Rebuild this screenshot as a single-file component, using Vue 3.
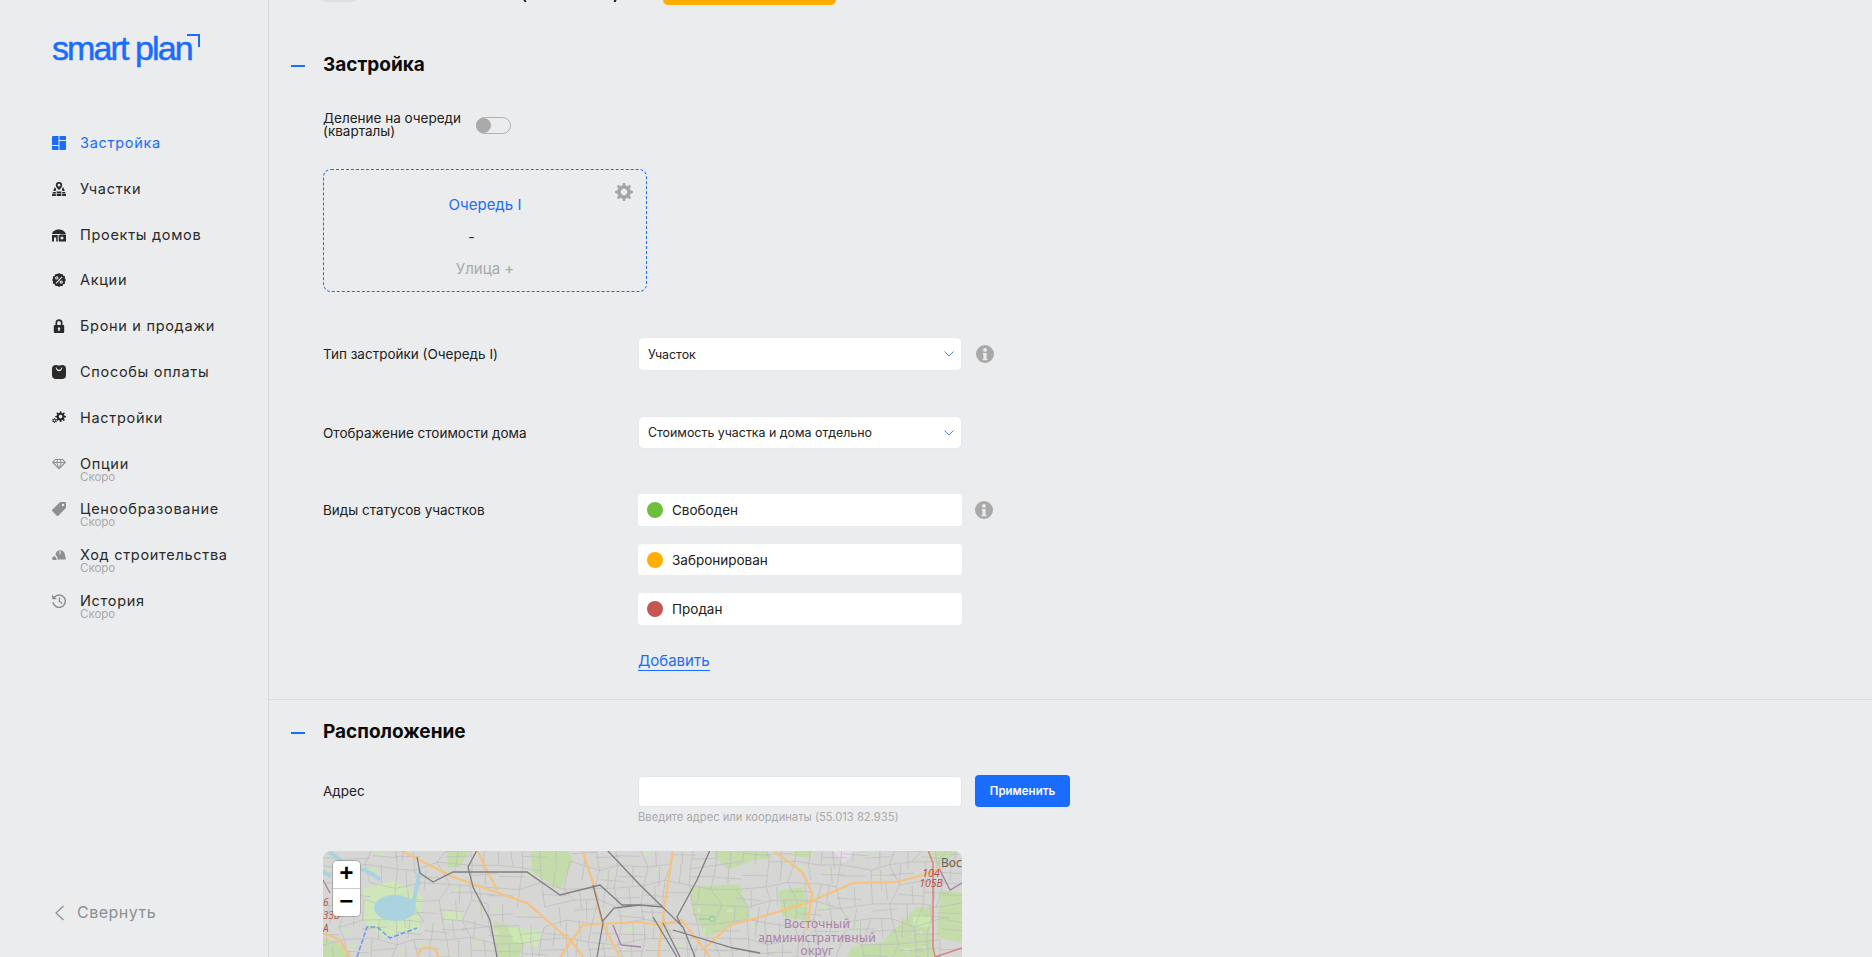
<template>
  <div class="page">
    <aside class="sidebar">
      <div class="logo">
        <span class="logo-text">smart plan</span>
        <span class="logo-corner"></span>
      </div>
      <nav class="menu">
        <a v-for="item in menu" :key="item.title" class="menu-item" :class="{ active: item.active }">
          <svg class="menu-icon" :class="{ muted: item.soon }" viewBox="0 0 14 14" v-html="item.icon"></svg>
          <span class="menu-text">
            <span class="menu-title">{{ item.title }}</span>
            <span v-if="item.soon" class="menu-soon">Скоро</span>
          </span>
        </a>
      </nav>
      <div class="collapse">
        <svg width="11" height="16" viewBox="0 0 11 16"><path d="M9.500 1 2 8l7.500 7" fill="none" stroke="#8e8f91" stroke-width="1.300" /></svg>
        <span>Свернуть</span>
      </div>
    </aside>

    <main class="content">
      <div class="top-stub">
        <span class="stub-grey"></span>
        <span class="stub-paren">(</span>
        <span class="stub-paren second">)</span>
        <span class="stub-btn"></span>
      </div>

      <section class="section first">
        <div class="section-head">
          <span class="dash"></span>
          <h2>Застройка</h2>
        </div>

        <div class="toggle-row">
          <span class="toggle-label">Деление на очереди<br />(кварталы)</span>
          <span class="toggle"><span class="knob"></span></span>
        </div>

        <div class="queue-card">
          <svg class="gear" viewBox="0 0 24 24"><path fill-rule="evenodd" :d="cardGear" /></svg>
          <div class="queue-title">Очередь I</div>
          <div class="queue-dash">-</div>
          <div class="queue-street">Улица +</div>
        </div>

        <div class="field-row type-row">
          <label>Тип застройки (Очередь I)</label>
          <div class="select">
            <span>Участок</span>
            <svg width="10" height="6" viewBox="0 0 10 6"><path d="M.5.5 5 5 9.500.5" fill="none" stroke="#3d84f5" stroke-width="1" /></svg>
          </div>
          <svg class="info" viewBox="0 0 18 18"><path fill-rule="evenodd" :d="infoPath" /></svg>
        </div>

        <div class="field-row cost-row">
          <label>Отображение стоимости дома</label>
          <div class="select short">
            <span>Стоимость участка и дома отдельно</span>
            <svg width="10" height="6" viewBox="0 0 10 6"><path d="M.5.5 5 5 9.500.5" fill="none" stroke="#3d84f5" stroke-width="1" /></svg>
          </div>
        </div>

        <div class="status-row">
          <label>Виды статусов участков</label>
          <div class="status-list">
            <div v-for="s in statuses" :key="s.name" class="status" :class="s.cls">
              <span class="status-dot" :style="{ background: s.color }"></span>
              <span>{{ s.name }}</span>
            </div>
            <a class="add-link">Добавить</a>
          </div>
          <svg class="info" viewBox="0 0 18 18"><path fill-rule="evenodd" :d="infoPath" /></svg>
        </div>
      </section>

      <section class="section second">
        <div class="section-head">
          <span class="dash"></span>
          <h2>Расположение</h2>
        </div>

        <div class="address-row">
          <label>Адрес</label>
          <div class="address-col">
            <input class="address-input" />
            <div class="hint">Введите адрес или координаты (55.013 82.935)</div>
          </div>
          <button class="apply">Применить</button>
        </div>

        <div class="map">
          <svg class="map-svg" viewBox="0 0 639 106">
            <rect width="639" height="106" fill="#d6d6d5" />
            <polygon v-for="(g, i) in greens" :key="'g' + i" :points="g" fill="#c4dcaa" />
            <polygon v-for="(g, i) in pales" :key="'p' + i" :points="g" fill="#cdebb0" opacity=".8" />
            <polygon points="510,-1 534,-1 520,12" fill="#e8dcea" />
            <path :d="spots" fill="#c9e6b8" />
            <path :d="streets" fill="none" stroke="#bcbcbc" stroke-width=".7" />
            <path d="M4-1 17 9c12 8 28 8 40 20M97 19c-2 12-6 26-7 38M0 20l8 6" fill="none" stroke="#aad3df" stroke-width="4" />
            <ellipse cx="72" cy="57" rx="21" ry="13" fill="#aad3df" />
            <path d="M34 106l10-30h10l13 11 27-10" fill="none" stroke="#6e9cf0" stroke-width="1.600" stroke-dasharray="5 2" />
            <path d="M0 29l7 13M617 19l10 20 12-7M290 74l8 20 20 2" fill="none" stroke="#a87fa5" stroke-width="1.300" />
            <path d="M376 68h10" stroke="#7fcba0" stroke-width="1" />
            <circle cx="389" cy="68" r="2.500" fill="none" stroke="#7fcba0" />
            <path :d="majorRoads" fill="none" stroke="#f6c27e" stroke-width="2.200" />
            <path :d="rails" fill="none" stroke="#7f7d80" stroke-width="1.300" />
            <path d="M605-1l5 13v84l2 10M612 106l27-9" fill="none" stroke="#d9837a" stroke-width="1.500" />
          </svg>
          <span class="map-label left-no">6<br />33В<br />А</span>
          <span class="map-label region">Восточный<br />административный<br />округ</span>
          <span class="map-label vost">Вост</span>
          <span class="map-label road">104<br />105В</span>
          <div class="zoom-control">
            <span class="zoom-btn">+</span>
            <span class="zoom-btn">−</span>
          </div>
        </div>
      </section>
    </main>
  </div>
</template>

<script setup>
// builds a cog outline with a round hole, used for the settings icons
function gear(cx, cy, R, r, teeth, hole) {
  const pts = []
  const step = (Math.PI * 2) / teeth
  for (let i = 0; i < teeth; i++) {
    const a = i * step - Math.PI / 2
    const list = [
      [a - step * 0.26, r],
      [a - step * 0.17, R],
      [a + step * 0.17, R],
      [a + step * 0.26, r],
    ]
    for (const [ang, rad] of list) {
      pts.push(`${(cx + Math.cos(ang) * rad).toFixed(2)} ${(cy + Math.sin(ang) * rad).toFixed(2)}`)
    }
  }
  const outline = 'M' + pts.join('L') + 'Z'
  return `${outline}M${cx - hole} ${cy}a${hole} ${hole} 0 1 0 ${hole * 2} 0a${hole} ${hole} 0 1 0 ${-hole * 2} 0z`
}

// scalloped badge outline
function badge(cx, cy, R, r, n) {
  const pts = []
  for (let i = 0; i < n * 2; i++) {
    const a = (i * Math.PI) / n
    const rad = i % 2 ? r : R
    pts.push(`${(cx + Math.cos(a) * rad).toFixed(2)} ${(cy + Math.sin(a) * rad).toFixed(2)}`)
  }
  return 'M' + pts.join('L') + 'Z'
}

const cardGear = gear(12, 12, 12, 9.2, 8, 4.2)
const infoPath = 'M9 0a9 9 0 1 0 0 18A9 9 0 0 0 9 0zM9 3a1.900 1.900 0 1 1 0 3.800A1.900 1.900 0 0 1 9 3zM6.900 8h3.700v6h1v1.200H6.400V14h1v-4.800h-.5z'

const menu = [
  { title: 'Застройка', active: true, icon: '<path d="M1 0h5.500v9H0V1a1 1 0 0 1 1-1zM7.500 0H13a1 1 0 0 1 1 1v3H7.500zM7.500 5H14v8a1 1 0 0 1-1 1H7.500zM0 10h6.500v4H1a1 1 0 0 1-1-1z"/>' },
  { title: 'Участки', icon: '<path fill-rule="evenodd" d="M7 0a3.200 3.200 0 0 1 3.200 3.200C10.200 5 8 7.200 7 8 6 7.200 3.800 5 3.800 3.200A3.200 3.200 0 0 1 7 0zm0 1.800a1.400 1.400 0 1 0 0 2.800 1.400 1.400 0 0 0 0-2.800zM2.800 5l1.400 2.300L3.500 9H1.200zM11.200 5 9.800 7.300l.7 1.700h2.300zM4.500 9h5l.3.6H4.200zM.9 10h3v1.500H.4zM4.700 10h4.600v1.500H4.700zM10.100 10h3l.5 1.500h-3.500zM.2 12.100h3.600V14H0zM4.700 12.100h4.600V14H4.700zM10.200 12.100h3.600L14 14h-3.800z"/>' },
  { title: 'Проекты домов', icon: '<path fill-rule="evenodd" d="M7 1.500c3.600 0 6.500 2.200 7 5H8.800c-.3-.3-.6-.5-1-.5H0c.5-2.800 3.400-4.500 7-4.500zM0 7h5.700v6.500H4.200V9.500H2v4H0zM6.700 7H14v6.500H6.700zM8.600 8.800v2.400h2.700V8.800z"/>' },
  { title: 'Акции', icon: `<path fill-rule="evenodd" d="${badge(7, 7, 7, 6.1, 12)}M9.700 3.400 3.600 9.900l.8.800 6.100-6.500zM4.800 3.200a1.700 1.700 0 1 0 0 3.400 1.700 1.700 0 0 0 0-3.400zm0 1.100a.6.6 0 1 1 0 1.200.6.6 0 0 1 0-1.200zM9.200 7.400a1.700 1.700 0 1 0 0 3.400 1.700 1.700 0 0 0 0-3.400zm0 1.100a.6.6 0 1 1 0 1.200.6.6 0 0 1 0-1.200z"/>` },
  { title: 'Брони и продажи', icon: '<path fill-rule="evenodd" d="M3.500 6V3.700a3.500 3.500 0 0 1 7 0V6h.7a1 1 0 0 1 1 1v6a1 1 0 0 1-1 1H2.800a1 1 0 0 1-1-1V7a1 1 0 0 1 1-1zM5.200 6h3.600V3.700a1.800 1.800 0 0 0-3.600 0zM7 8.300a1.200 1.200 0 0 0-.7 2.200V12h1.400v-1.500A1.200 1.200 0 0 0 7 8.300z"/>' },
  { title: 'Способы оплаты', icon: '<path fill-rule="evenodd" d="M4 0c.8 0 1.200.6 3 .6S9.200 0 10 0a4 4 0 0 1 4 4v6a4 4 0 0 1-4 4H4a4 4 0 0 1-4-4V4a4 4 0 0 1 4-4zM3.600 2.600C4 5 5.400 6.200 7 6.200s3-1.200 3.400-3.600h-1C9.200 4 8.200 4.800 7 4.800S4.800 4 4.600 2.600z"/>' },
  { title: 'Настройки', icon: `<path fill-rule="evenodd" d="${gear(8.6, 5.6, 5.4, 4, 8, 1.8)}"/><path fill-rule="evenodd" d="${gear(2.5, 9.6, 2.5, 1.8, 6, 0.9)}"/>` },
  { title: 'Опции', soon: true, icon: '<path fill-rule="evenodd" d="M3 2h8l3 3.500-7 7-7-7zM3.500 3 1.800 5h2.600L5.300 3zM6.200 3 5.400 5h3.200L7.800 3zM8.700 3l.9 2h2.600l-1.700-2zM2.300 6l3.600 3.700L4.500 6zM5.500 6 7 10.500 8.500 6zM9.500 6l-1.400 3.700L11.700 6z"/>' },
  { title: 'Ценообразование', soon: true, icon: '<path fill-rule="evenodd" d="M8.500 0H13a1 1 0 0 1 1 1v4.500a1 1 0 0 1-.3.700L6.200 13.700a1 1 0 0 1-1.400 0L.3 9.200a1 1 0 0 1 0-1.400L7.800.3a1 1 0 0 1 .7-.3zM11 1.800a1.200 1.200 0 1 0 0 2.400 1.200 1.200 0 0 0 0-2.400z"/>' },
  { title: 'Ход строительства', soon: true, icon: '<path d="M7.500 2v4.500h1V2.100c2.700.5 4.700 2.800 4.700 5.700v1.400c.5.200.8.600.8 1.100 0 .8-.7 1.200-1.500 1.200H5.500V9.200L3.400 6.600C4 4.100 5.500 2.400 7.500 2zM2.700 8l1.800 2.200v1.700h-3C.7 11.900 0 11.300 0 10.500 0 9.300 1.200 8.400 2.700 8z"/>' },
  { title: 'История', soon: true, icon: '<path d="M2.300 3.300A6.200 6.200 0 1 1 1 8.200" fill="none" stroke="#8e8f91" stroke-width="1.500"/><path d="M0 .5 5 5.200H.2zM6.700 3.500h1.500v3.700l2.400 1.800-.9 1.100-3-2.300z"/>' },
]

const statuses = [
  { name: 'Свободен', color: '#6dbe3c' },
  { name: 'Забронирован', color: '#ffae00', cls: 'thin' },
  { name: 'Продан', color: '#c65651' },
]

const greens = [
  '207,-1 244,-1 250,9 237,39 210,22',
  '124,-1 147,-1 137,16 125,16',
  '0,86 17,93 27,106 0,106',
  '387,-1 405,19 430,9 450,7 440,-1',
  '477,-1 490,-1 487,7 464,4',
  '367,36 417,33 427,66 384,86 370,62',
  '594,56 610,56 607,82 560,90',
  '617,39 639,42 639,92 614,86',
  '607,-1 637,-1 615,16',
  '529,96 610,82 610,106 524,106',
  '170,70 205,80 196,106 176,106',
  '455,40 480,36 486,70 460,66',
]

const pales = [
  '40,38 70,30 100,44 96,80 60,86 42,72',
  '120,60 135,58 140,68 124,72',
  '185,76 220,80 214,96 190,90',
  '590,66 608,66 606,76 590,76',
]

const majorRoads =
  'M77-1 130 26l74 26 46 40 10 14M154-1l20 40M259-1l11 33 9 40 18 34M237 106l23-32 54-3 23 3 22-5 28 37M0 82l17 7 10 17M350-1l-10 67-5 40M380 99l27-25 27-7 50-15 46-20 44-1 26-7 39-15M450-1l30 23 9 20-5 37M95 106a10 10 0 0 1 20 0'

const rails =
  'M94 6l3 16 13 9 20-10h74l33 23 40-10 22 20h18l23 2M154-1l-9 17 5 20 17 33 7 37M284-1l33 35 43 42 12 30M270 34l10 38-6 34M279 71l12-14 26-3M387-1l-13 30-20 37 5 10M350 79l60 18 27 5M340 72l20 40M330 66l24 40'

let seed = 4711
const rnd = () => {
  seed = (seed * 16807) % 2147483647
  return seed / 2147483647
}

// thin street grid, irregular on purpose so that it reads as a city map
const lattice = []
for (let j = 0; j <= 6; j++) {
  const row = []
  for (let i = 0; i <= 26; i++) {
    row.push([i * 25 - 5 + rnd() * 14 - 7, j * 19 - 4 + rnd() * 10 - 5])
  }
  lattice.push(row)
}
let streets = ''
let spots = ''
lattice.forEach((row, j) => {
  row.forEach((p, i) => {
    const right = row[i + 1]
    const down = lattice[j + 1] && lattice[j + 1][i]
    if (right && rnd() > 0.12) streets += `M${p[0].toFixed(1)} ${p[1].toFixed(1)}L${right[0].toFixed(1)} ${right[1].toFixed(1)}`
    if (down && rnd() > 0.12) streets += `M${p[0].toFixed(1)} ${p[1].toFixed(1)}L${down[0].toFixed(1)} ${down[1].toFixed(1)}`
    if (right && rnd() > 0.3) {
      const mx = (p[0] + right[0]) / 2
      streets += `M${mx.toFixed(1)} ${p[1].toFixed(1)}l${(rnd() * 6 - 3).toFixed(1)} 19`
    }
    if (down && rnd() > 0.3) {
      const my = (p[1] + down[1]) / 2
      streets += `M${p[0].toFixed(1)} ${my.toFixed(1)}l25 ${(rnd() * 5 - 2.5).toFixed(1)}`
    }
    if (rnd() > 0.55) {
      const w = (2 + rnd() * 5).toFixed(1)
      const h = (1.5 + rnd() * 3).toFixed(1)
      spots += `M${(p[0] + 5).toFixed(1)} ${(p[1] + 4).toFixed(1)}h${w}v${h}h-${w}z`
    }
  })
})
</script>

<style>
html,
body {
  margin: 0;
  height: 100%;
  overflow: hidden;
  background: #ebecee;
}
</style>

<style scoped>
.page {
  display: flex;
  height: 957px;
  overflow: hidden;
  background: #ebecee;
  font-family: Inter, "Noto Sans", sans-serif;
  color: #212121;
}

.sidebar {
  display: flex;
  flex-direction: column;
  flex: none;
  width: 216px;
  padding: 30px 0 0 52px;
  border-right: 1px solid #d6d7d9;
}

.logo {
  display: flex;
  align-items: flex-start;
  height: 36px;
}

.logo-text {
  font-family: "Liberation Sans", sans-serif;
  font-size: 34px;
  line-height: 36px;
  letter-spacing: -1.9px;
  color: #1a6cff;
  -webkit-text-stroke: 0.5px #1a6cff;
  white-space: nowrap;
}

.logo-corner {
  flex: none;
  width: 11px;
  height: 11px;
  margin: 4px 0 0 -5px;
  border-top: 2px solid #1a6cff;
  border-right: 2px solid #1a6cff;
}

.menu {
  display: flex;
  flex-direction: column;
  margin-top: 58px;
}

.menu-item {
  display: flex;
  align-items: flex-start;
  gap: 14px;
  height: 45.8px;
  padding-top: 10px;
  box-sizing: border-box;
  color: #2a2a2a;
  fill: #2a2a2a;
}

.menu-item.active {
  color: #1a6cff;
  fill: #1a6cff;
}

.menu-icon {
  width: 14px;
  height: 14px;
  margin-top: 2px;
  flex: none;
}

.menu-icon.muted {
  fill: #8e8f91;
}

.menu-text {
  display: flex;
  flex-direction: column;
}

.menu-title {
  font-size: 14.5px;
  line-height: 17px;
  letter-spacing: 0.7px;
  white-space: nowrap;
}

.menu-soon {
  font-size: 11.5px;
  line-height: 11px;
  color: #a9a9a9;
}

.collapse {
  display: flex;
  align-items: center;
  gap: 12px;
  margin: auto 0 35px 2px;
  font-size: 16px;
  line-height: 19px;
  letter-spacing: 0.5px;
  color: #8e8f91;
}

.content {
  flex: 1;
  min-width: 0;
}

.top-stub {
  display: flex;
  align-items: flex-end;
  height: 5px;
  padding-left: 54px;
  overflow: hidden;
}

.stub-grey {
  width: 33px;
  height: 2px;
  margin-bottom: 3px;
  border-radius: 0 0 3px 3px;
  background: #dfe0e2;
}

.stub-paren {
  width: 8px;
  margin: 0 0 3px 165px;
  font-size: 16px;
  line-height: 16px;
  font-weight: 600;
  color: #111;
}

.stub-paren.second {
  margin-left: 84px;
}

.stub-btn {
  width: 173px;
  height: 5px;
  margin-left: 42px;
  border-radius: 0 0 5px 5px;
  background: #ffae00;
}

.section {
  padding-left: 54px;
}

.section.first {
  height: 695px;
  padding-top: 47px;
  box-sizing: border-box;
  border-bottom: 1px solid #dcdddf;
}

.section.second {
  padding-top: 19px;
}

.section-head {
  position: relative;
  display: flex;
  align-items: center;
  height: 24px;
}

.dash {
  position: absolute;
  left: -32px;
  top: 13px;
  width: 14px;
  height: 2px;
  background: #1a6cff;
}

h2 {
  margin: 0;
  font-size: 19px;
  font-weight: 700;
  color: #0b0b0b;
}

.toggle-row {
  display: flex;
  align-items: center;
  gap: 15px;
  margin-top: 36px;
}

.toggle-label {
  font-size: 13.5px;
  line-height: 13px;
}

.toggle {
  display: block;
  position: relative;
  width: 33px;
  height: 15px;
  border: 1px solid #b0b0b0;
  border-radius: 10px;
}

.knob {
  position: absolute;
  left: -1px;
  top: 0;
  width: 15px;
  height: 15px;
  border-radius: 50%;
  background: #aaa;
}

.queue-card {
  position: relative;
  width: 322px;
  height: 121px;
  margin-top: 31px;
  border: 1px dashed #1a6cff;
  border-radius: 8px;
  text-align: center;
}

.gear {
  position: absolute;
  top: 13px;
  right: 13px;
  width: 18px;
  height: 18px;
  fill: #a5a5a5;
}

.queue-title {
  margin-top: 26px;
  font-size: 15px;
  line-height: 18px;
  color: #1a6cff;
}

.queue-dash {
  margin-top: 14px;
  padding-right: 27px;
  font-size: 14px;
  line-height: 18px;
}

.queue-street {
  margin-top: 14px;
  font-size: 15px;
  line-height: 18px;
  color: #a9a9a9;
}

.field-row {
  display: flex;
  align-items: center;
}

.field-row label,
.status-row label,
.address-row label {
  width: 315px;
  flex: none;
  font-size: 13.5px;
}

.type-row {
  margin-top: 46px;
}

.cost-row {
  margin-top: 47px;
}

.select {
  display: flex;
  align-items: center;
  justify-content: space-between;
  width: 322px;
  height: 32px;
  margin-left: 1px;
  padding: 0 7px 0 9px;
  box-sizing: border-box;
  background: #fff;
  border-radius: 4px;
  box-shadow: 0 0 1px rgba(0, 0, 0, 0.15);
  font-size: 12.4px;
}

.select.short {
  height: 31px;
}

.info {
  width: 18px;
  height: 18px;
  flex: none;
  margin-left: 15px;
  fill: #a9a9a9;
}

.status-row {
  display: flex;
  align-items: flex-start;
  margin-top: 46px;
}

.status-row label {
  padding-top: 8px;
}

.status-row .info {
  margin: 7px 0 0 13px;
}

.status-list {
  display: flex;
  flex-direction: column;
  width: 324px;
  gap: 18px;
}

.status {
  display: flex;
  align-items: center;
  gap: 9px;
  height: 32px;
  padding-left: 9px;
  background: #fff;
  border-radius: 4px;
  font-size: 13.5px;
}

.status.thin {
  height: 31px;
}

.status-dot {
  width: 16px;
  height: 16px;
  border-radius: 50%;
}

.add-link {
  align-self: flex-start;
  margin-top: 8px;
  border-bottom: 1px solid #1a6cff;
  font-size: 15px;
  line-height: 19px;
  color: #1a6cff;
}

.address-row {
  display: flex;
  align-items: flex-start;
  margin-top: 33px;
}

.address-row label {
  padding-top: 7px;
}

.address-col {
  width: 324px;
}

.address-input {
  display: block;
  width: 100%;
  height: 31px;
  padding: 0;
  border: 1px solid #e4e5e7;
  border-radius: 4px;
  box-sizing: border-box;
  background: #fff;
}

.hint {
  margin-top: 3px;
  font-size: 11.2px;
  line-height: 14px;
  color: #a9a9a9;
}

.apply {
  width: 95px;
  height: 32px;
  margin: -1px 0 0 13px;
  border: 0;
  border-radius: 4px;
  background: #1a6cff;
  color: #fff;
  font-family: inherit;
  font-size: 11.5px;
  font-weight: 600;
}

.map {
  position: relative;
  width: 639px;
  height: 106px;
  margin-top: 27px;
  border-radius: 8px 8px 0 0;
  overflow: hidden;
}

.map-svg {
  display: block;
  width: 100%;
  height: 100%;
  filter: blur(0.3px);
}

.map-label {
  position: absolute;
  font-family: "Noto Sans", sans-serif;
  white-space: nowrap;
}

.left-no {
  left: 0;
  top: 45px;
  font-size: 10px;
  line-height: 13px;
  font-style: italic;
  color: #c0584f;
}

.region {
  left: 434px;
  top: 66px;
  width: 120px;
  font-size: 12px;
  line-height: 13.5px;
  letter-spacing: 0.2px;
  text-align: center;
  color: #a981a8;
}

.vost {
  left: 618px;
  top: 4px;
  font-size: 12px;
  line-height: 15px;
  color: #666;
}

.road {
  left: 594px;
  top: 17px;
  width: 28px;
  font-size: 10.5px;
  line-height: 10px;
  font-style: italic;
  text-align: center;
  color: #b9504a;
}

.zoom-control {
  position: absolute;
  left: 10px;
  top: 10px;
  display: flex;
  flex-direction: column;
  width: 27px;
  border-radius: 4px;
  background: #fff;
  box-shadow: 0 0 0 1px rgba(0, 0, 0, 0.2);
}

.zoom-btn {
  display: flex;
  align-items: center;
  justify-content: center;
  height: 27px;
  font-family: "Liberation Mono", monospace;
  font-size: 24px;
  font-weight: 700;
  color: #000;
}

.zoom-btn:first-child {
  border-bottom: 1px solid #ccc;
}
</style>
